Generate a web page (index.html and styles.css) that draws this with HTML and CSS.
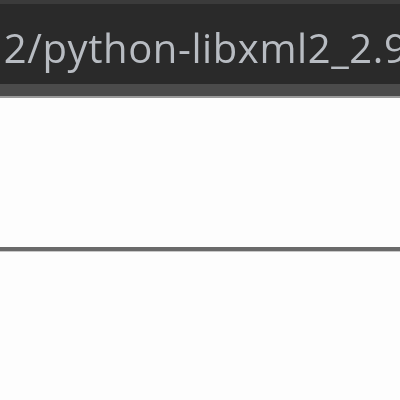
FILE: index.html
```html
<!DOCTYPE html>
<html>
<head>
<meta charset="utf-8">
<link rel="stylesheet" href="styles.css">
</head>
<body>
<div class="titlebar">
  <div class="topline"></div>
  <div class="path"><span class="text">l2/python-libxml2_2.9.1</span></div>
  <div class="band"></div>
  <div class="edge"></div>
</div>
<div class="content"></div>
<div class="divider"></div>
<div class="rest"></div>
</body>
</html>
```
FILE: styles.css
```css
html, body {
  margin: 0;
  padding: 0;
  width: 400px;
  height: 400px;
  overflow: hidden;
  background: #fdfdfd;
}
.titlebar {
  display: flex;
  flex-direction: column;
}
.topline {
  height: 4px;
  background: #3b3b3b;
}
.path {
  height: 80px;
  background: #2a2a2a;
  overflow: hidden;
  white-space: nowrap;
  display: flex;
  align-items: center;
}
.text {
  font-family: "Open Sans", "Noto Sans", sans-serif;
  font-size: 40px;
  color: #b8bcc2;
  margin-left: -7px;
  letter-spacing: 0.6px;
  position: relative;
  top: 3px;
  filter: blur(0.5px);
}
.band {
  height: 12px;
  background: #4b4b4b;
}
.edge {
  height: 2px;
  background: #9a9a9a;
}
.content {
  height: 149px;
  background: #fdfdfd;
}
.divider {
  height: 4px;
  background: #6a6a6a;
  border-bottom: 1px solid #c8c8c8;
}
.rest {
  height: 150px;
  background: #fdfdfd;
}
```
